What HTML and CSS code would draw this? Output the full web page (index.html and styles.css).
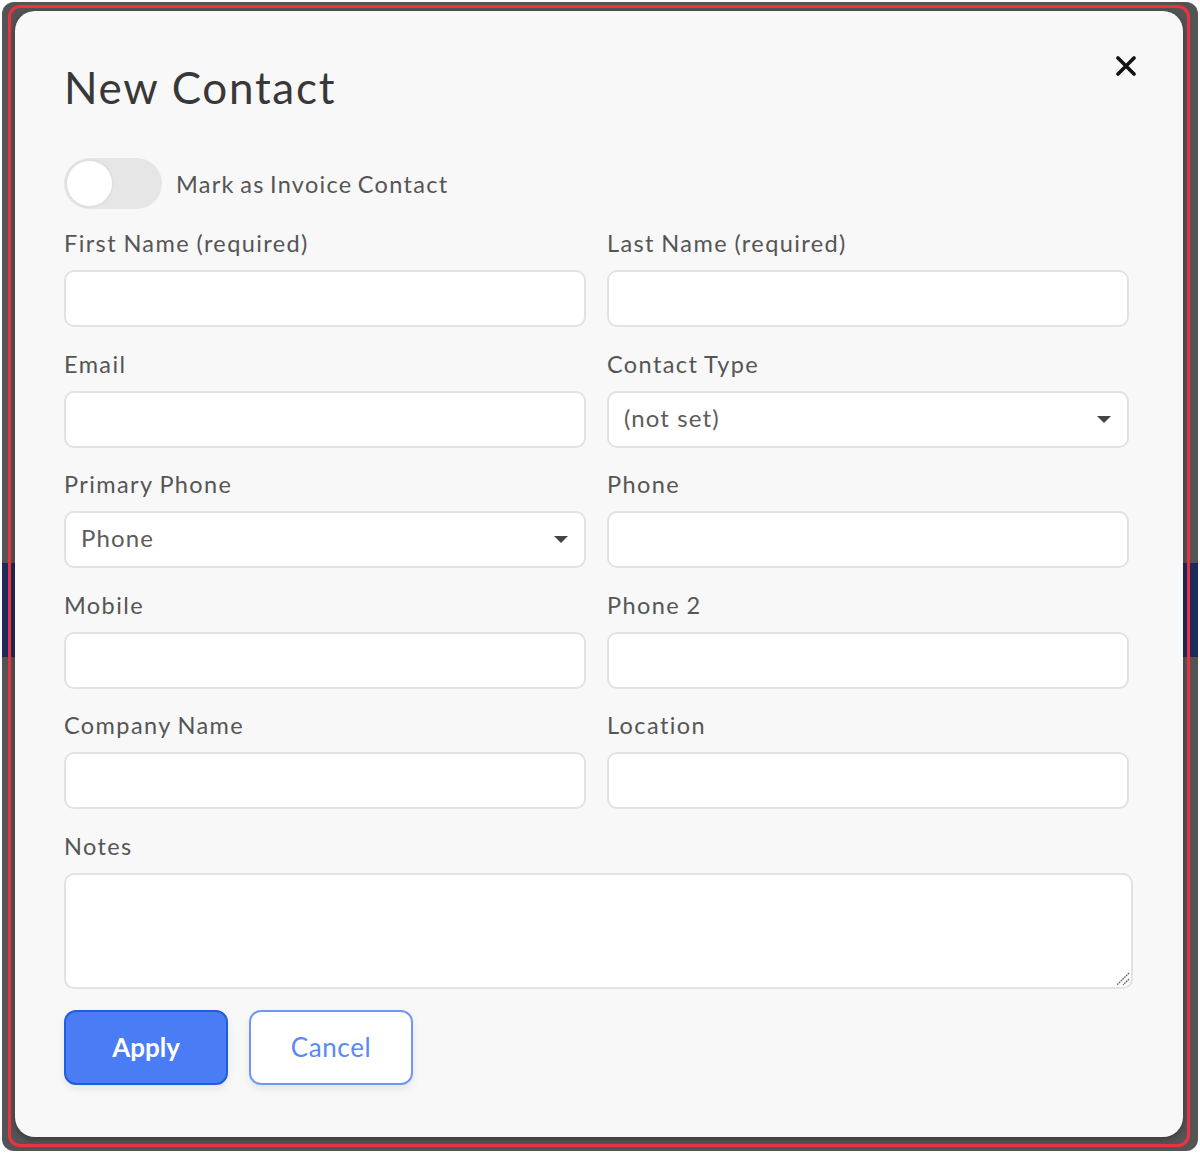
FILE: index.html
```html
<!DOCTYPE html>
<html lang="en">
<head>
    <meta charset="UTF-8">
    <meta name="viewport" content="width=device-width, initial-scale=1.0">
    <title>New Contact</title>
    <link rel="stylesheet" href="styles.css">
</head>
<body>

    <div class="frame">
        <div class="outline">
            <div class="modal">
                <button class="close" aria-label="Close">
                    <svg width="20" height="20" viewBox="0 0 20 20"><path d="M2 2 L18 18 M18 2 L2 18" stroke="#111" stroke-width="3.6" stroke-linecap="round"/></svg>
                </button>

                <h1>New Contact</h1>

                <label class="switch-row">
                    <span class="switch"><span class="knob"></span></span>
                    <span>Mark as Invoice Contact</span>
                </label>

                <div class="grid">
                    <div class="field">
                        <label>First Name&nbsp;(required)</label>
                        <div class="input"></div>
                    </div>
                    <div class="field">
                        <label>Last Name&nbsp;(required)</label>
                        <div class="input"></div>
                    </div>
                    <div class="field">
                        <label>Email</label>
                        <div class="input"></div>
                    </div>
                    <div class="field">
                        <label>Contact Type</label>
                        <div class="input select"><span>(not set)</span><span class="caret"></span></div>
                    </div>
                    <div class="field">
                        <label>Primary Phone</label>
                        <div class="input select"><span>Phone</span><span class="caret"></span></div>
                    </div>
                    <div class="field">
                        <label>Phone</label>
                        <div class="input"></div>
                    </div>
                    <div class="field">
                        <label>Mobile</label>
                        <div class="input"></div>
                    </div>
                    <div class="field">
                        <label>Phone 2</label>
                        <div class="input"></div>
                    </div>
                    <div class="field">
                        <label>Company Name</label>
                        <div class="input"></div>
                    </div>
                    <div class="field">
                        <label>Location</label>
                        <div class="input"></div>
                    </div>
                </div>

                <div class="field notes">
                    <label>Notes</label>
                    <div class="input textarea">
                        <svg class="grip" width="16" height="16" viewBox="0 0 16 16"><path d="M15 3 L3 15 M15 9 L9 15" stroke="#666" stroke-width="1.4" stroke-dasharray="1.6 0.9"/></svg>
                    </div>
                </div>

                <div class="actions">
                    <button class="btn apply">Apply</button>
                    <button class="btn cancel">Cancel</button>
                </div>
            </div>
        </div>
    </div>

</body>
</html>
```

FILE: styles.css
```css
* { box-sizing: border-box; }
body { margin: 0; padding: 0; background: #fff; font-family: Lato, "Open Sans", sans-serif; }
.frame { margin: 2px; width: 1196px; height: 1149px; padding: 3px 8px 4px 6px; border-radius: 12px; background: linear-gradient(to bottom, #545454 0, #545454 561px, #1d2b5c 561px, #1d2b5c 655px, #545454 655px); }
.outline { height: 100%; border: 3px solid #ee3340; border-radius: 12px; padding: 3px 4px 7px 4px; }
.modal { position: relative; height: 100%; background: #f8f8f8; border-radius: 20px; padding: 51px 50px 0 49px; box-shadow: 0 2px 6px rgba(0, 0, 0, 0.35); }
.close { position: absolute; top: 44px; right: 46px; width: 22px; height: 22px; padding: 0; border: none; background: none; cursor: pointer; display: flex; align-items: center; justify-content: center; }
h1 { margin: 0; font-size: 44px; line-height: 51px; font-weight: 400; color: #383838; letter-spacing: 1.7px; }
.switch-row { margin-top: 45px; display: flex; align-items: center; gap: 14px; font-size: 23.5px; letter-spacing: 1.3px; word-spacing: -2px; color: #555; height: 51px; }
.switch { width: 98px; height: 51px; border-radius: 26px; background: #e6e6e6; padding: 3px; display: flex; align-items: center; }
.knob { width: 45px; height: 45px; border-radius: 50%; background: #fff; box-shadow: 0 0 0 2px #e0e0e0; }
.grid { margin-top: 20px; width: 1065px; display: grid; grid-template-columns: 1fr 1fr; column-gap: 21px; row-gap: 22.5px; }
.field label { display: block; font-size: 23.5px; line-height: 28px; letter-spacing: 1.4px; word-spacing: -1px; color: #555; margin-bottom: 13px; }
.input { height: 57px; background: #fff; border: 2px solid #e2e2e2; border-radius: 10px; }
.select { display: flex; align-items: center; justify-content: space-between; padding: 0 16px 4px 15px; font-size: 24px; letter-spacing: 1.1px; color: #5c5c5c; }
.caret { width: 0; height: 0; margin-top: 4px; border-left: 7px solid transparent; border-right: 7px solid transparent; border-top: 7px solid #444; }
.notes { margin-top: 22.5px; width: 1069px; }
.textarea { height: 116px; position: relative; }
.grip { position: absolute; right: 1px; bottom: 1px; }
.actions { margin-top: 21px; display: flex; gap: 21px; }
.btn { width: 164px; height: 75px; border-radius: 12px; font-family: Lato, "Open Sans", sans-serif; font-size: 26px; cursor: pointer; box-shadow: 0 4px 8px rgba(0, 0, 0, 0.08); }
.apply { background: #4a7cf6; border: 2px solid #1f5ce0; color: #fff; font-weight: 700; }
.cancel { background: #fff; border: 2px solid #6e97f6; color: #5a89f4; letter-spacing: 0.6px; }
```
